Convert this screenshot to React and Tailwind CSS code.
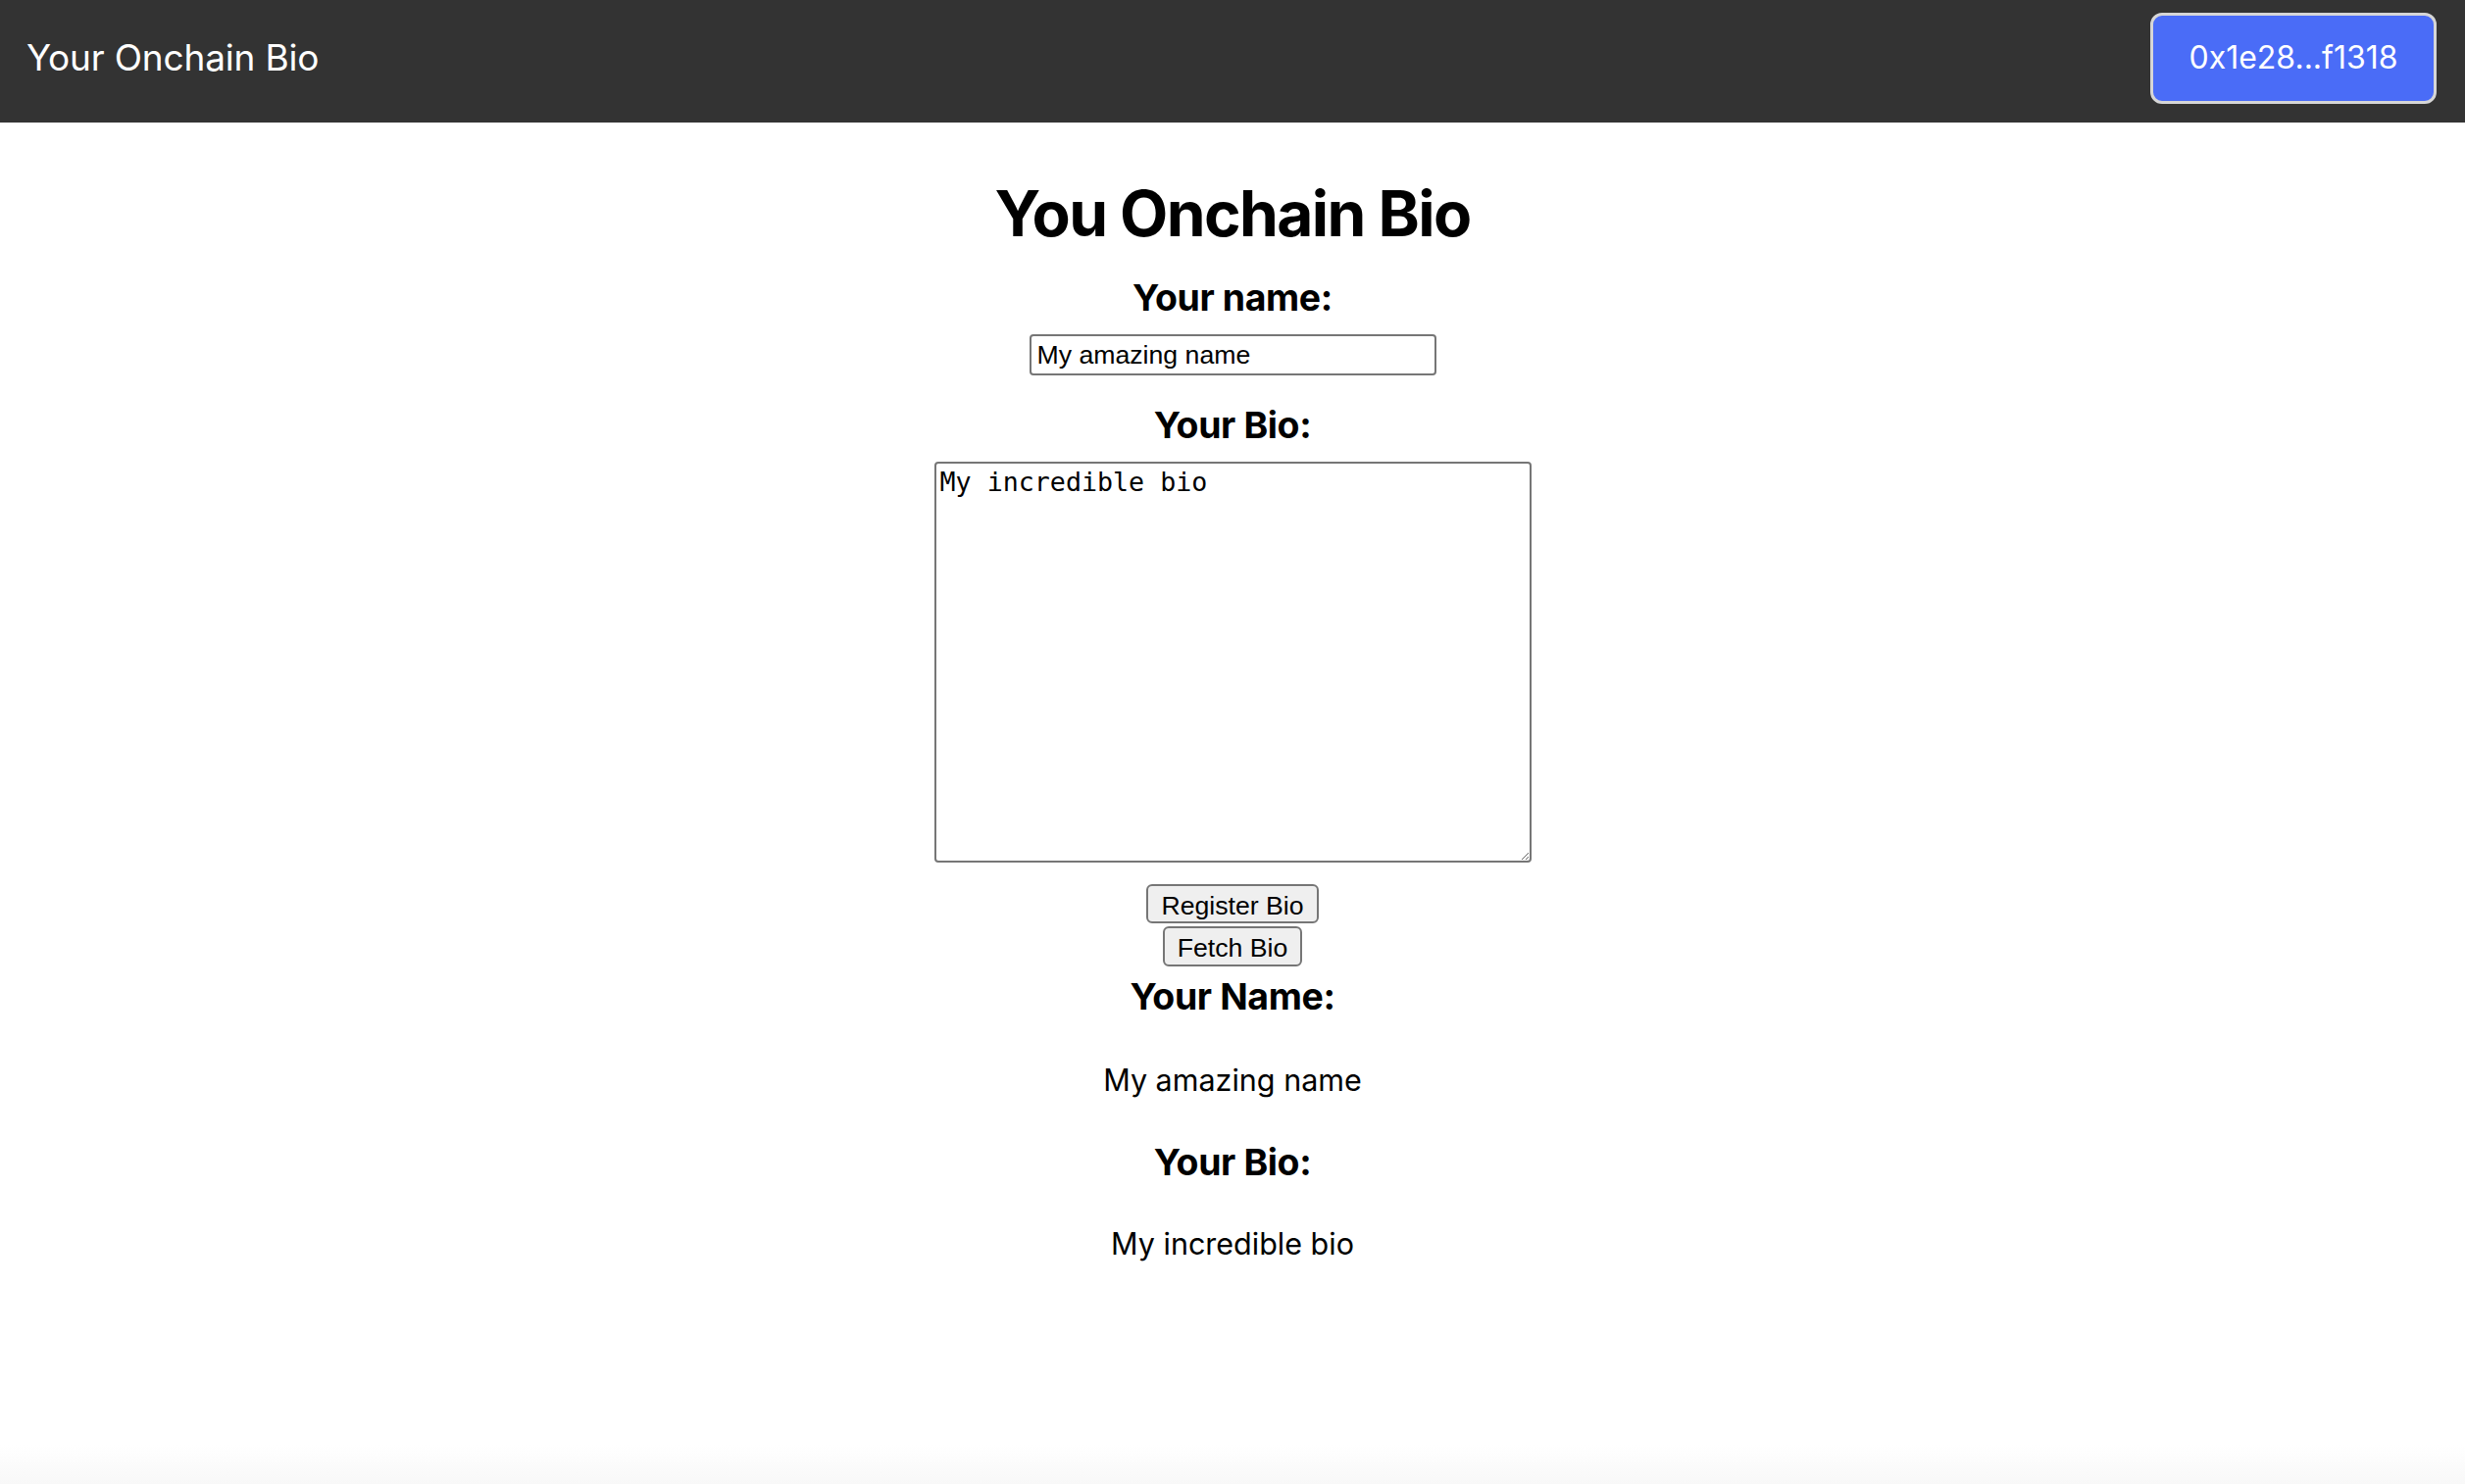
import React from "react";

const Header = () => {
  return (
    <header className="h-[125px] bg-[#333333] flex items-center justify-between pl-[27px] pr-[29px] pb-[7px]">
      <div className="text-white text-[37px] tracking-[-0.005em] font-['Inter',sans-serif]">Your Onchain Bio</div>
      <button className="w-[292px] h-[93px] bg-[#4a6cf7] border-[3px] border-[#d6d6d6] rounded-[12px] text-white text-[32px] font-['Inter',sans-serif]">
        0x1e28...f1318
      </button>
    </header>
  );
};

const App = () => {
  return (
    <div className="min-h-[1514px] flex flex-col bg-white font-['Inter',sans-serif] text-black">
      <Header />
      <main className="flex flex-col items-center text-center">
        <h1 className="mt-[54px] text-[64px] leading-[77px] font-bold tracking-[-0.025em]">You Onchain Bio</h1>

        <h3 className="mt-[25px] text-[37.44px] leading-[45px] font-bold tracking-[-0.01em]">Your name:</h3>
        <input
          type="text"
          defaultValue="My amazing name"
          className="mt-[15px] w-[415px] h-[42px] border-2 border-[#767676] rounded-[4px] pl-[6px] pr-[4px] text-[26.67px] font-['Liberation_Sans',Arial,sans-serif] text-left"
        />

        <h3 className="mt-[28px] text-[37.44px] leading-[45px] font-bold tracking-[-0.01em]">Your Bio:</h3>
        <textarea
          defaultValue="My incredible bio"
          className="mt-[15px] w-[609px] h-[409px] border-2 border-[#767676] rounded-[4px] px-[4px] py-[3px] text-[26.67px] leading-[31px] font-['DejaVu_Sans_Mono',monospace] text-left resize"
        />

        <button className="mt-[22px] h-[40px] px-[13px] bg-[#efefef] border-2 border-[#767676] rounded-[6px] text-[26.67px] font-['Liberation_Sans',Arial,sans-serif]">
          Register Bio
        </button>
        <button className="mt-[3px] h-[41px] px-[13px] bg-[#efefef] border-2 border-[#767676] rounded-[6px] text-[26.67px] font-['Liberation_Sans',Arial,sans-serif]">
          Fetch Bio
        </button>

        <h3 className="mt-[8px] text-[37.44px] leading-[45px] font-bold tracking-[-0.01em]">Your Name:</h3>
        <p className="mt-[43px] text-[30.5px] leading-[39px]">My amazing name</p>
        <h3 className="mt-[42px] text-[37.44px] leading-[45px] font-bold tracking-[-0.01em]">Your Bio:</h3>
        <p className="mt-[41px] text-[30.5px] leading-[39px]">My incredible bio</p>
      </main>
      <div className="mt-auto h-[40px] bg-gradient-to-b from-white to-[#f8f8f8]" />
    </div>
  );
};

export default App;
